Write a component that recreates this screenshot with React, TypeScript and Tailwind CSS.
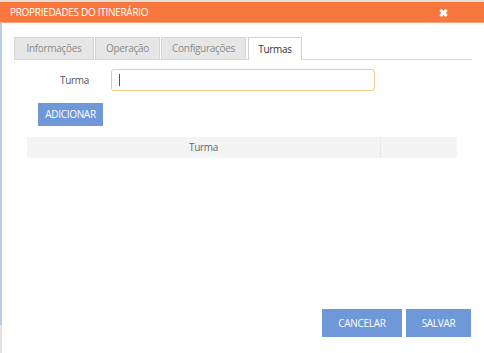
import React from "react";

export default function App() {
  const font = { fontFamily: '"Open Sans", "Noto Sans", sans-serif' };
  return (
    <div className="w-[484px] h-[353px] overflow-hidden bg-[#ece9e3] flex flex-col" style={font}>
      <div className="h-[2px] bg-[#e6e2da]" />
      <div className="h-[21px] bg-[#f7773f] flex items-center justify-between pl-[10px] pr-[36px] border-b border-[#f9a27a]">
        <span className="text-white text-[10px] tracking-[-0.3px] leading-none">PROPRIEDADES DO ITINERÁRIO</span>
        <span className="text-white text-[11px] font-bold leading-none">✖</span>
      </div>
      <div className="flex flex-1">
        <div className="w-[2px] flex flex-col">
          <div className="h-[302px] bg-[#b9cde6]" />
          <div className="flex-1 bg-[#e4e2dc]" />
        </div>
        <div className="flex-1 bg-white flex flex-col relative text-[10px] tracking-[-0.3px]">
          {/* tabs */}
          <div className="mt-[14px] ml-[12px] mr-[12px] flex items-end border-b border-[#d8d8d8] h-[23px]">
            <div className="h-[22px] w-[80px] bg-[#e6e6e6] border border-[#d6d6d6] border-b-0 flex items-center justify-center text-[#8a8a8a]">Informações</div>
            <div className="ml-[1px] h-[22px] w-[65px] bg-[#e6e6e6] border border-[#d6d6d6] border-b-0 flex items-center justify-center text-[#8a8a8a]">Operação</div>
            <div className="ml-[1px] h-[22px] w-[85px] bg-[#e6e6e6] border border-[#d6d6d6] border-b-0 flex items-center justify-center text-[#8a8a8a]">Configurações</div>
            <div className="ml-[2px] h-[23px] w-[54px] bg-white border border-[#d0d0d0] border-b-0 -mb-[1px] flex items-center justify-center text-[#333]">Turmas</div>
          </div>
          {/* form row */}
          <div className="mt-[9px] flex items-center h-[22px]">
            <div className="w-[109px] pr-[22px] text-right text-[#555]">Turma</div>
            <div className="w-[264px] h-[22px] border border-[#f5c78e] rounded-[3px] flex items-center pl-[7px]">
              <div className="w-[1px] h-[12px] bg-[#555]" />
            </div>
          </div>
          <div className="mt-[12px] ml-[36px]">
            <div className="w-[65px] h-[23px] bg-[#6e98d8] flex items-center justify-center text-white">ADICIONAR</div>
          </div>
          <div className="mt-[11px] ml-[25px] w-[430px] h-[21px] bg-[#f4f4f4] flex text-[#666]">
            <div className="w-[354px] border-r border-[#e8e8e8] flex items-center justify-center">Turma</div>
            <div className="flex-1" />
          </div>
          <div className="flex-1" />
          <div className="mb-[16px] flex justify-end pr-[13px] gap-[4px]">
            <div className="w-[80px] h-[28px] bg-[#6e98d8] flex items-center justify-center text-white">CANCELAR</div>
            <div className="w-[65px] h-[28px] bg-[#6e98d8] flex items-center justify-center text-white">SALVAR</div>
          </div>
        </div>
      </div>
    </div>
  );
}
